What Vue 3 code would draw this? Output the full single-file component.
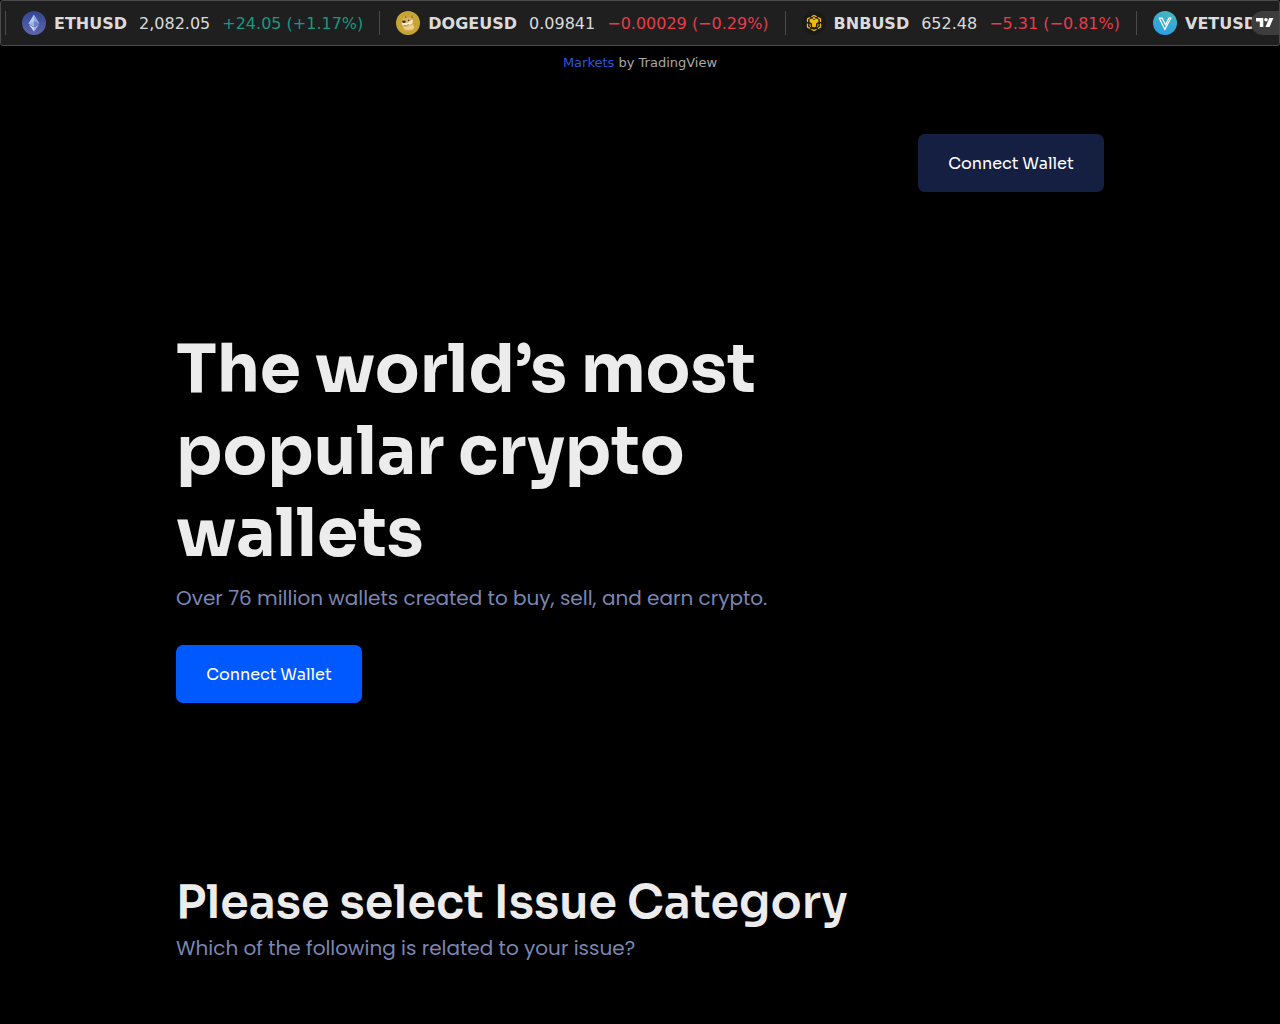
<template>
  <div class="page">
    <section class="ticker" aria-label="Markets">
      <ul class="ticker-list">
        <li v-for="coin in coins" :key="coin.symbol" class="ticker-item">
          <svg v-if="coin.symbol === 'ETHUSD'" class="coin-icon" viewBox="0 0 24 24" aria-hidden="true">
            <defs>
              <linearGradient id="eth-bg" x1="0" y1="0" x2="0" y2="1">
                <stop offset="0" stop-color="#2f4690" />
                <stop offset="1" stop-color="#6264ac" />
              </linearGradient>
            </defs>
            <circle cx="12" cy="12" r="12" fill="url(#eth-bg)" />
            <path d="M12 3.5 6.5 12.5 12 15.8Z" fill="#b5d0f5" />
            <path d="M12 3.5 17.5 12.5 12 15.8Z" fill="#8fa6e2" />
            <path d="M12 10 6.5 12.5 12 15.8Z" fill="#9db6ec" />
            <path d="M12 10 17.5 12.5 12 15.8Z" fill="#6f82c8" />
            <path d="M6.8 13.4 12 16.5 12 20.5Z" fill="#c9e2fc" />
            <path d="M17.2 13.4 12 16.5 12 20.5Z" fill="#a3bbea" />
          </svg>

          <svg v-else-if="coin.symbol === 'DOGEUSD'" class="coin-icon" viewBox="0 0 24 24" aria-hidden="true">
            <circle cx="12" cy="12" r="12" fill="#c5a632" />
            <path d="M6.8 7.8 9 4 11.2 6.4 14 6.2 16.4 3.8 17.2 8 16.8 12.5 18.6 16 17.4 19 13 20 8 19.4 6 15 5.4 11.5Z" fill="#dcb362" />
            <path d="M9 4 11.2 6.4 8.6 7.4Z M16.4 3.8 17.2 8 14.4 6.4Z" fill="#a87632" />
            <path d="M5.6 11.8 8.8 11 11 12 16.6 8.6 16.4 12.2 12.6 14.4 7.2 15.2Z" fill="#f8ebc9" />
            <path d="M7.2 16.2 12.6 15.6 17 13.8 18 16.6 16 18.6 9.5 18.6Z" fill="#edd08e" />
            <ellipse cx="8" cy="10.8" rx="1.8" ry="1.3" fill="#3d3026" />
            <circle cx="12.6" cy="9.4" r=".8" fill="#52412b" />
            <path d="M7.3 14.6 10.4 14.6 13 13.4" fill="none" stroke="#a47a42" stroke-width=".8" />
          </svg>

          <svg v-else-if="coin.symbol === 'BNBUSD'" class="coin-icon" viewBox="0 0 24 24" aria-hidden="true">
            <circle cx="12" cy="12" r="12" fill="#1a1a19" />
            <path d="M9.4 5.8 12 4.4 14.6 5.8 M15.8 6.5 18.5 8 18.5 11 M18.5 12.6 18.5 16 15.8 17.5 M14.6 18.2 12 19.6 9.4 18.2 M8.2 17.5 5.5 16 5.5 12.6 M5.5 11 5.5 8 8.2 6.5" fill="none" stroke="#f0b90b" stroke-width="1.3" />
            <path d="M7.6 8.6 9.6 7.6 12 9 14.4 7.6 16.4 8.6 16.4 11 14 12.4 14 15.4 12 16.6 10 15.4 10 12.4 7.6 11Z" fill="#f0b90b" />
            <path d="M12 6.1 14 7.2 12 8.3 10 7.2Z" fill="#f0b90b" />
            <path d="M8 12.8 8 15 9.2 15.8 M16 12.8 16 15 14.8 15.8" fill="none" stroke="#f0b90b" stroke-width="1" />
          </svg>

          <svg v-else class="coin-icon" viewBox="0 0 24 24" aria-hidden="true">
            <defs>
              <linearGradient id="vet-bg" x1=".7" y1="0" x2=".3" y2="1">
                <stop offset="0" stop-color="#45b8bf" />
                <stop offset="1" stop-color="#2a9de8" />
              </linearGradient>
            </defs>
            <circle cx="12" cy="12" r="12" fill="url(#vet-bg)" />
            <path d="M5.8 7.2H9.2L12.8 14.6 M6.4 7.4 11.9 18.4 17.8 7.2H15.8L12.6 14" fill="none" stroke="#fff" stroke-width="1.2" />
          </svg>

          <a href="#" class="symbol">{{ coin.symbol }}</a>
          <span class="price">{{ coin.price }}</span>
          <span :class="coin.up ? 'up' : 'down'">{{ coin.change }}</span>
        </li>
      </ul>
      <a href="#" class="tv-badge" aria-label="TradingView">
        <svg viewBox="0 0 18 10" aria-hidden="true">
          <path d="M0 0H7.3V9H3.8V3.5H0Z" fill="#fff" />
          <circle cx="10" cy="1.8" r="1.8" fill="#fff" />
          <path d="M13.2 0H17.4L13.6 9H9.5Z" fill="#fff" />
        </svg>
      </a>
    </section>
    <p class="copyright"><a href="#">Markets</a> by TradingView</p>

    <div class="container">
      <header class="header">
        <button type="button" class="btn btn-dark">Connect Wallet</button>
      </header>

      <main>
        <section class="hero">
          <h1>The world’s most popular crypto wallets</h1>
          <p class="lead">Over 76 million wallets created to buy, sell, and earn crypto.</p>
          <button type="button" class="btn btn-blue">Connect Wallet</button>
        </section>

        <section class="issues">
          <h2>Please select Issue Category</h2>
          <p class="lead">Which of the following is related to your issue?</p>
        </section>
      </main>
    </div>
  </div>
</template>

<script setup>
const coins = [
  { symbol: 'ETHUSD', price: '2,082.05', change: '+24.05 (+1.17%)', up: true },
  { symbol: 'DOGEUSD', price: '0.09841', change: '−0.00029 (−0.29%)', up: false },
  { symbol: 'BNBUSD', price: '652.48', change: '−5.31 (−0.81%)', up: false },
  { symbol: 'VETUSD', price: '', change: '', up: false }
]
</script>

<style>
body {
  margin: 0;
  background: #000;
}
</style>

<style scoped>
.page {
  min-height: 100vh;
  overflow: hidden;
  background: #000;
  font-family: Sora, Inter, sans-serif;
  color: #ececec;
}

h1,
h2,
p {
  margin: 0;
}

a {
  text-decoration: none;
}

/* ticker */
.ticker {
  position: relative;
  box-sizing: border-box;
  height: 46px;
  overflow: hidden;
  border: 1px solid #4a4a4a;
  border-radius: 3px;
  background: #1f1f1f;
  font-family: "DejaVu Sans", sans-serif;
  font-size: 16px;
  line-height: 26px;
}

.ticker-list {
  display: flex;
  margin: 0;
  padding: 10px 4px;
  list-style: none;
}

.ticker-item {
  display: flex;
  flex: none;
  gap: 12px;
  height: 24px;
  padding: 0 16px;
  border-left: 1px solid #4a4a4a;
  white-space: nowrap;
}

.coin-icon {
  width: 24px;
  height: 24px;
  margin-right: -4px;
}

.symbol {
  font-weight: 700;
  color: #dbdbdb;
}

.price {
  color: #dbdbdb;
}

.up {
  color: #179981;
}

.down {
  color: #e63c4b;
}

.tv-badge {
  position: absolute;
  top: 10px;
  right: 0;
  display: flex;
  align-items: center;
  justify-content: center;
  width: 28px;
  height: 24px;
  border-radius: 12px 0 0 12px;
  background: #3d3d3d;
}

.tv-badge svg {
  width: 18px;
  height: 10px;
}

.copyright {
  font-family: "DejaVu Sans", sans-serif;
  font-size: 13px;
  line-height: 34px;
  text-align: center;
  color: #a8a8a8;
}

.copyright a {
  color: #2b57dc;
}

/* content */
.container {
  max-width: 928px;
  margin: 0 auto;
  padding: 54px 16px;
}

.header {
  display: flex;
  justify-content: flex-end;
}

.btn {
  min-width: 186px;
  height: 58px;
  padding: 0 30px;
  border: 0;
  border-radius: 7px;
  font-family: inherit;
  font-size: 16px;
  font-weight: 500;
  color: #fff;
  cursor: pointer;
}

.btn-dark {
  background: #151f42;
}

.btn-blue {
  background: #0059ff;
}

.hero {
  padding-top: 137px;
}

h1 {
  max-width: 620px;
  font-size: 66px;
  font-weight: 700;
  line-height: 82px;
}

.lead {
  font-family: Poppins, Inter, sans-serif;
  font-size: 20px;
  font-weight: 400;
  line-height: 32px;
  color: #7d86b2;
}

.hero .lead {
  margin: 7px 0 31px;
}

.issues {
  padding-top: 169px;
}

h2 {
  font-size: 46px;
  font-weight: 600;
  line-height: 60px;
}
</style>
